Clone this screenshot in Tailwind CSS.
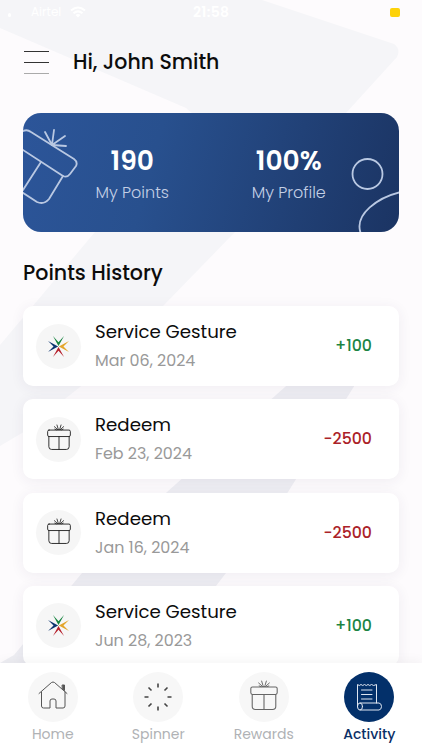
<!DOCTYPE html>
<html lang="en">
  <head>
    <meta charset="UTF-8" />
    <meta name="viewport" content="width=device-width, initial-scale=1.0" />
    <title>Points History</title>
    <script src="https://cdn.jsdelivr.net/npm/@tailwindcss/browser@4"></script>
  </head>

  <body class="bg-[#fdfbfd] font-['Poppins','Inter',sans-serif] text-[#0c0c0c]">
    <!-- Shared icons -->
    <svg class="hidden">
      <symbol id="gift" viewBox="0 0 26 28">
        <g fill="none" stroke="currentColor" stroke-linejoin="round" stroke-linecap="round">
          <rect x="0.7" y="6.500" width="24.600" height="7" rx="1.500" />
          <path d="M2 13.500V24.500a3 3 0 0 0 3 3h16a3 3 0 0 0 3-3V13.500M13 13.500v14" />
          <path stroke-width="0.900" d="M12 5L10.800 1M14 5L15.200 1M11 5.500L8 2.800M15 5.500L18 2.800M10 6.200L8.500 5.500M16 6.200L17.500 5.500M11 6H15" />
        </g>
      </symbol>
      <symbol id="star" viewBox="0 0 22 22">
        <path fill="#16843f" d="M5.200 0L11 6.500L16.800 0L11 10.600Z" />
        <path fill="#b51f2b" d="M5.200 22L11 15.500L16.800 22L11 11.400Z" />
        <path fill="#0b3470" d="M0 5.200L10.600 11L0 16.800L5.800 11Z" />
        <path fill="#e3a52a" d="M22 5.200L11.400 11L22 16.800L16.200 11Z" />
      </symbol>
    </svg>

    <div class="relative h-[750px] w-[422px] overflow-hidden flex flex-col">
      <!-- Background shapes -->
      <svg class="absolute inset-0 -z-10" width="422" height="750" viewBox="0 0 422 750">
        <path fill="#f5f5f8" d="M0 0H262L394 44Q401 49 397 57L346 113L235 232L165 304L80 387L22 433L0 446V345L95 232L200 120L186 108L0 28Z" />
        <path fill="#eeeef3" d="M363 372L288 492L216 586L150 663H0L14 655L82 573L167 492L285 387L300 372Z" />
      </svg>

      <!-- Status bar -->
      <div class="h-6 shrink-0 flex items-center pl-2 pr-[22px] text-white text-[12px]">
        <span class="mt-1.5 h-1 w-[3px] rounded-sm bg-white"></span>
        <span class="ml-5 w-[39px]">Airtel</span>
        <svg width="16" height="12" viewBox="0 0 16 12" fill="none" stroke="#fff" stroke-width="2">
          <path d="M1 4.500Q8-1.500 15 4.500M3.500 7.300Q8 3.500 12.500 7.300" />
          <path d="M8 11.500L5.500 9Q8 7 10.500 9Z" fill="#fff" stroke="none" />
        </svg>
        <span class="ml-[107px] text-[14px] font-semibold tracking-[0.3px]">21:58</span>
        <span class="ml-auto h-[9px] w-[10px] rounded-[2px] bg-[#fdd20a]"></span>
      </div>

      <!-- Header -->
      <header class="h-[77px] shrink-0 flex items-center pl-6 gap-6">
        <div class="flex flex-col gap-[10px] w-[25px] -mt-px">
          <span class="h-px bg-[#333]"></span>
          <span class="h-px bg-[#333]"></span>
          <span class="h-px bg-[#aaa]"></span>
        </div>
        <h1 class="text-[20.500px] font-medium">Hi, John Smith</h1>
      </header>

      <main class="flex-1 min-h-0 overflow-hidden px-[23px] pt-3">
        <!-- Summary card -->
        <section class="relative h-[119px] overflow-hidden rounded-[18px] bg-linear-[105deg,#2c5599,#28508e_35%,#1b3463] text-white">
          <svg class="absolute inset-0" width="376" height="119" viewBox="0 0 376 119" fill="none" stroke="#b9c8e2" stroke-width="1.800" stroke-linecap="round" stroke-linejoin="round">
            <path d="M-3 20Q3 15 8 19L51 46Q55 49 53 53L47 61Q44 65 40 63L-3 35" />
            <path d="M40 63L26 86Q21 92 14 89L-3 78M18 49L0 77" />
            <path d="M29 32L22 19M29 32L31 17M29 32L42 23M29 32L43 33" />
            <circle cx="344.500" cy="61" r="15" />
            <path d="M378 79C356 84 330 101 338 121" />
          </svg>
          <div class="flex pl-[31px] pr-[32px] pt-8 text-center">
            <div class="flex-1">
              <p class="text-[26.500px] leading-8 font-semibold">190</p>
              <p class="text-[16px] leading-8 font-light text-[#c3cfe5]">My Points</p>
            </div>
            <div class="flex-1">
              <p class="text-[26.500px] leading-8 font-semibold">100%</p>
              <p class="text-[16px] leading-8 font-light text-[#c3cfe5]">My Profile</p>
            </div>
          </div>
        </section>

        <h2 class="mt-[25px] text-[20.600px] leading-8 font-medium">Points History</h2>

        <!-- History list -->
        <ul class="mt-[17px] flex flex-col gap-[13.300px]">
          <li class="h-20 shrink-0 flex items-center rounded-[10px] bg-white pl-[13px] pr-[27px] shadow-[0_2px_14px_rgba(60,40,90,0.07)]">
            <span class="size-[45px] rounded-full bg-[#f6f6f6] flex items-center justify-center">
              <svg width="21" height="21"><use href="#star" /></svg>
            </span>
            <div class="ml-[14px] pt-px flex-1">
              <p class="text-[18.200px] leading-7">Service Gesture</p>
              <p class="text-[15.900px] leading-[29px] text-[#999]">Mar 06, 2024</p>
            </div>
            <span class="text-[15.800px] font-medium text-[#1c8444]">+100</span>
          </li>
          <li class="h-20 shrink-0 flex items-center rounded-[10px] bg-white pl-[13px] pr-[27px] shadow-[0_2px_14px_rgba(60,40,90,0.07)]">
            <span class="size-[45px] rounded-full bg-[#f6f6f6] flex items-center justify-center">
              <svg class="text-[#222] -mt-1" width="24" height="26"><use href="#gift" /></svg>
            </span>
            <div class="ml-[14px] pt-px flex-1">
              <p class="text-[18.200px] leading-7">Redeem</p>
              <p class="text-[15.900px] leading-[29px] text-[#999]">Feb 23, 2024</p>
            </div>
            <span class="text-[15.800px] font-medium text-[#ab2228]">−2500</span>
          </li>
          <li class="h-20 shrink-0 flex items-center rounded-[10px] bg-white pl-[13px] pr-[27px] shadow-[0_2px_14px_rgba(60,40,90,0.07)]">
            <span class="size-[45px] rounded-full bg-[#f6f6f6] flex items-center justify-center">
              <svg class="text-[#222] -mt-1" width="24" height="26"><use href="#gift" /></svg>
            </span>
            <div class="ml-[14px] pt-px flex-1">
              <p class="text-[18.200px] leading-7">Redeem</p>
              <p class="text-[15.900px] leading-[29px] text-[#999]">Jan 16, 2024</p>
            </div>
            <span class="text-[15.800px] font-medium text-[#ab2228]">−2500</span>
          </li>
          <li class="h-20 shrink-0 flex items-center rounded-[10px] bg-white pl-[13px] pr-[27px] shadow-[0_2px_14px_rgba(60,40,90,0.07)]">
            <span class="size-[45px] rounded-full bg-[#f6f6f6] flex items-center justify-center">
              <svg width="21" height="21"><use href="#star" /></svg>
            </span>
            <div class="ml-[14px] pt-px flex-1">
              <p class="text-[18.200px] leading-7">Service Gesture</p>
              <p class="text-[15.900px] leading-[29px] text-[#999]">Jun 28, 2023</p>
            </div>
            <span class="text-[15.800px] font-medium text-[#1c8444]">+100</span>
          </li>
        </ul>
      </main>

      <!-- Bottom navigation -->
      <nav class="relative h-[87px] shrink-0 grid grid-cols-4 bg-white pt-[9px] text-center text-[14px] text-[#b0b2b5] shadow-[0_-3px_10px_rgba(0,0,0,0.04)]">
        <a class="flex flex-col items-center">
          <span class="size-[50px] rounded-full bg-[#f7f7f7] flex items-center justify-center">
            <svg class="-mt-1" width="30" height="30" viewBox="0 0 30 30" fill="none" stroke="#555" stroke-linecap="round" stroke-linejoin="round">
              <path d="M1 13.500L13.500 2.500Q15 1.500 16.500 2.500L29 13.500" />
              <path d="M3.500 12V26Q3.500 28 5.500 28H12V21Q12 19 14 19H16Q18 19 18 21V28H25Q27 28 27 26V12" />
              <path d="M24.500 5H26.500V10.500L24.500 8.800Z" fill="#555" />
            </svg>
          </span>
          <span class="leading-6">Home</span>
        </a>
        <a class="flex flex-col items-center">
          <span class="size-[50px] rounded-full bg-[#f7f7f7] flex items-center justify-center">
            <svg width="30" height="30" viewBox="0 0 30 30" fill="none" stroke="#444" stroke-width="1.600">
              <path d="M15 1.500V5.500M15 24.500V28.500M1.500 15H5.500M24.500 15H28.500M5.500 5.500L8.500 8.500M21.500 21.500L24.500 24.500M5.500 24.500L8.500 21.500M21.500 8.500L24.500 5.500" />
            </svg>
          </span>
          <span class="leading-6">Spinner</span>
        </a>
        <a class="flex flex-col items-center">
          <span class="size-[50px] rounded-full bg-[#f7f7f7] flex items-center justify-center">
            <svg class="text-[#666] -mt-1" width="28" height="30"><use href="#gift" /></svg>
          </span>
          <span class="leading-6">Rewards</span>
        </a>
        <a class="flex flex-col items-center text-[#0b2f66]">
          <span class="size-[50px] rounded-full bg-[#03306a] flex items-center justify-center">
            <svg width="26" height="28" viewBox="0 0 26 28" fill="none" stroke="#dfe6f1" stroke-linecap="round" stroke-linejoin="round">
              <path d="M1.500 24V1.500Q3.300 3.500 5 1.500Q6.700 3.500 8.500 1.500Q10.300 3.500 12 1.500Q13.700 3.500 15.500 1.500Q17.300 3.500 20.500 1.500V20M5.500 7H16M5.500 11.500H16M5.500 16H16" />
              <path d="M4 20H23Q25.500 20.500 25.500 23.500T23 27H4" />
              <ellipse cx="4" cy="23.500" rx="2.500" ry="3.500" />
            </svg>
          </span>
          <span class="leading-6 font-medium">Activity</span>
        </a>
      </nav>
    </div>
  </body>
</html>
